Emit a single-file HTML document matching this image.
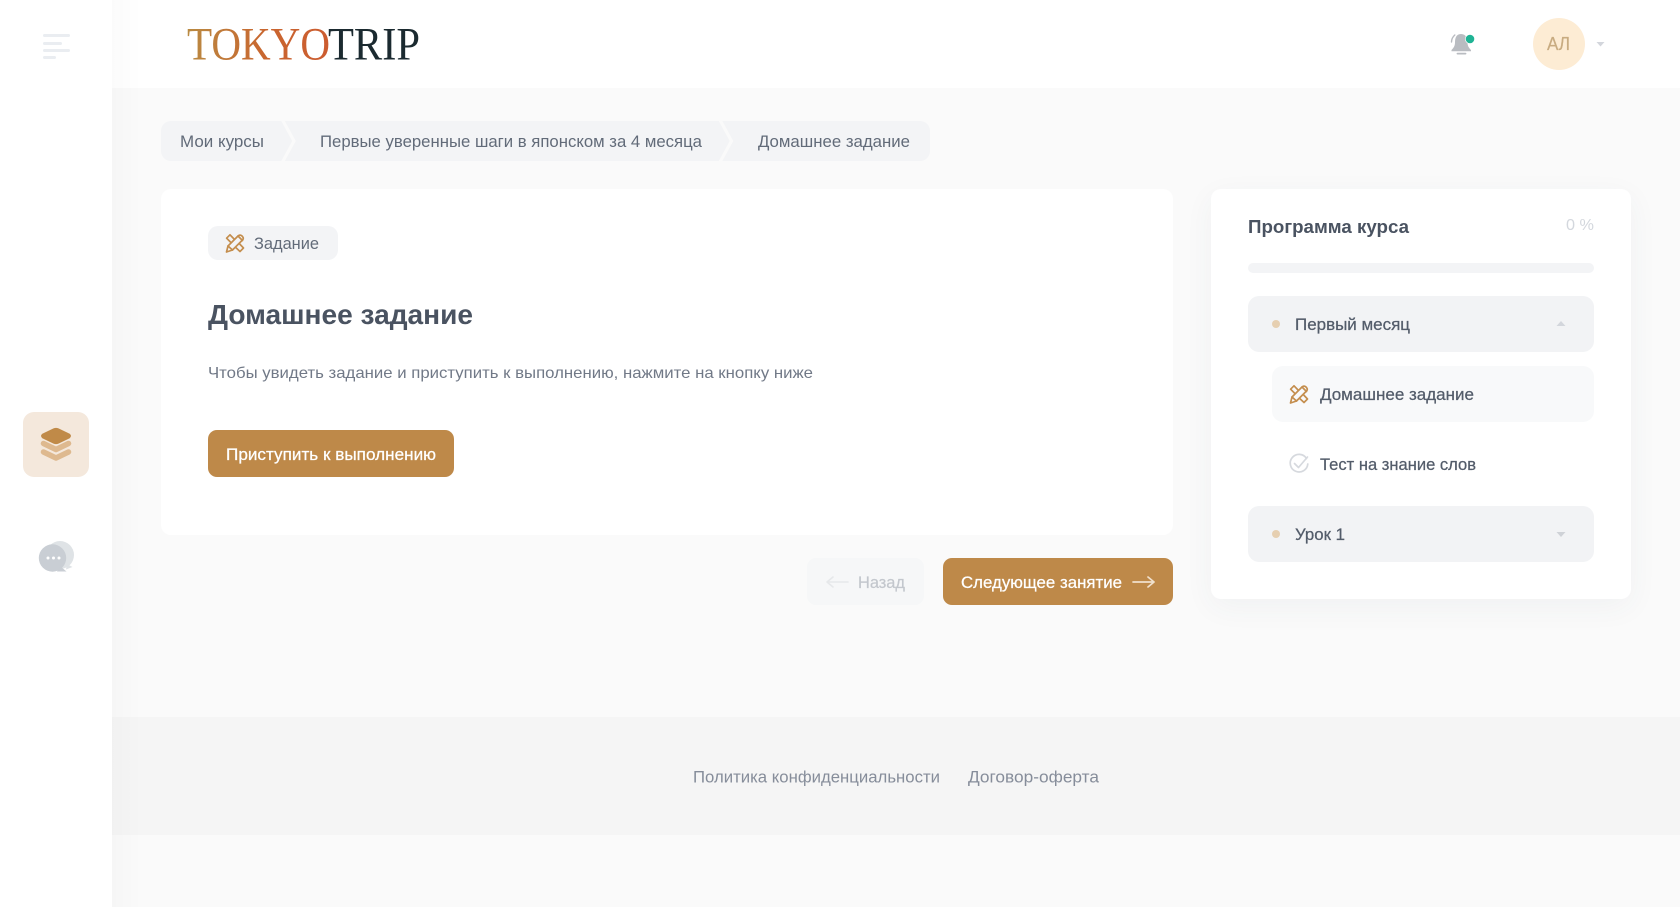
<!DOCTYPE html>
<html lang="ru">
<head>
<meta charset="utf-8">
<title>Домашнее задание</title>
<style>
html,body{margin:0;padding:0;width:1680px;height:907px;overflow:hidden;background:#fafafa;font-family:"Liberation Sans",sans-serif}
body{position:relative}
#p{position:absolute;left:0;top:0;width:1680px;height:907px;filter:blur(.35px)}
.b{position:absolute;box-sizing:border-box}
svg.o{position:absolute;left:0;top:0}
</style>
</head>
<body>
<div id="p">
<div class="b" style="left:112px;top:717px;width:1568px;height:118px;background:#f5f5f5"></div>
<div class="b" style="left:112px;top:0;width:1568px;height:88px;background:#fff"></div>
<div class="b" style="left:112px;top:0;width:30px;height:907px;background:linear-gradient(90deg,rgba(0,0,0,.016),rgba(0,0,0,0))"></div>
<div class="b" style="left:0;top:0;width:112px;height:907px;background:#fff"></div>
<div class="b" style="left:23px;top:412px;width:66px;height:65px;background:#f4e8dc;border-radius:11px"></div>
<div class="b" style="left:161px;top:121px;width:769px;height:40px;background:#f3f4f6;border-radius:10px"></div>
<div class="b" style="left:161px;top:189px;width:1012px;height:346px;background:#fff;border-radius:10px"></div>
<div class="b" style="left:208px;top:226px;width:130px;height:34px;background:#f3f4f6;border-radius:10px"></div>
<div class="b" style="left:208px;top:430px;width:246px;height:47px;background:#be8949;border-radius:9px"></div>
<div class="b" style="left:806.5px;top:558px;width:117px;height:47px;background:#f6f7f8;border-radius:9px"></div>
<div class="b" style="left:943px;top:558px;width:230px;height:47px;background:#be8949;border-radius:9px"></div>
<div class="b" style="left:1211px;top:189px;width:420px;height:410px;background:#fff;border-radius:10px;box-shadow:0 8px 30px rgba(60,70,90,.05)"></div>
<div class="b" style="left:1248px;top:263px;width:346px;height:10px;background:#f3f4f6;border-radius:5px"></div>
<div class="b" style="left:1248px;top:296px;width:346px;height:56px;background:#f2f3f5;border-radius:11px"></div>
<div class="b" style="left:1272px;top:366px;width:322px;height:56px;background:#f8f9fa;border-radius:11px"></div>
<div class="b" style="left:1248px;top:506px;width:346px;height:56px;background:#f2f3f5;border-radius:11px"></div>
<div class="b" style="left:1533px;top:18px;width:52px;height:52px;background:#fdecd4;border-radius:50%"></div>

<svg class="o" width="1680" height="907" viewBox="0 0 1680 907" xmlns="http://www.w3.org/2000/svg" font-family="'Liberation Sans',sans-serif">
<defs>
<linearGradient id="lg" gradientUnits="userSpaceOnUse" x1="187" y1="0" x2="330" y2="0">
<stop offset="0" stop-color="#b98a42"/><stop offset=".55" stop-color="#c9662f"/><stop offset="1" stop-color="#cc5c30"/>
</linearGradient>
<g id="task" fill="none" stroke="#c48e4e" stroke-width="1.7" stroke-linejoin="round" stroke-linecap="round">
<path d="M1.5 19 3 13 13 3Q15 1.2 17 3L17.5 3.5Q19 5.5 17.5 7L7.5 17Z"/>
<path d="M13 3 17.5 7.5M3 13 7.5 17"/>
<path d="M8.7 5.6 5 1.8 1.6 5.2 5.4 9"/>
<path d="M14.7 11 18.5 15 15 18.5 11 14.7"/>
</g>
</defs>

<!-- hamburger -->
<g fill="#eaedf1">
<rect x="43" y="34" width="27" height="3" rx="1.5"/>
<rect x="43" y="42" width="19" height="3" rx="1.5"/>
<rect x="43" y="49" width="27" height="3" rx="1.5"/>
<rect x="43" y="56" width="13" height="3" rx="1.5"/>
</g>

<!-- layers -->
<path d="M53.5 428.4Q56 427.4 58.5 428.4L69.7 433.8Q72.2 436 69.7 438.2L58.5 443.6Q56 444.6 53.5 443.6L42.3 438.2Q39.8 436 42.3 433.8Z" fill="#c08a48"/>
<g fill="none" stroke="#deb98f" stroke-width="5.5" stroke-linecap="round" stroke-linejoin="round">
<path d="M43.5 443.5 56 449.5 68.5 443.5"/>
<path d="M43.5 452 56 458 68.5 452"/>
</g>

<!-- chat -->
<circle cx="60" cy="555" r="14" fill="#dfe3e6"/>
<path d="M67 564 72.5 567 66 569.5Z" fill="#dfe3e6"/>
<circle cx="52.5" cy="558" r="13.7" fill="#c9ced4"/>
<path d="M60 566 66.5 571.5 57 571.5Z" fill="#c9ced4"/>
<g fill="#fff"><circle cx="48" cy="558" r="1.5"/><circle cx="53.5" cy="558" r="1.5"/><circle cx="59" cy="558" r="1.5"/></g>

<!-- logo -->
<text x="187" y="59.5" font-family="'Liberation Serif',serif" font-size="47" fill="url(#lg)" textLength="143" lengthAdjust="spacingAndGlyphs">TOKYO</text>
<text x="328" y="59.5" font-family="'Liberation Serif',serif" font-size="47" fill="#1b2a30" textLength="92" lengthAdjust="spacingAndGlyphs">TRIP</text>

<!-- bell -->
<path d="M1461 34C1466 34 1467.5 38.5 1467.5 42.5 1467.5 46 1469 48 1471 50L1471 51.2H1451.5L1451.5 50C1453.5 48 1455 46 1455 42.5 1455 38.5 1456 34 1461 34Z" fill="#b9bcc1"/>
<path d="M1457.5 53.6H1465.5" stroke="#b9bcc1" stroke-width="1.8" stroke-linecap="round"/>
<path d="M1451.5 42C1451.5 39 1452.8 36.8 1454.8 35" stroke="#b9bcc1" stroke-width="1.4" fill="none" stroke-linecap="round"/>
<circle cx="1470" cy="39" r="5" fill="#fff"/>
<circle cx="1470" cy="39" r="4.3" fill="#1fb394"/>

<!-- avatar -->
<text x="1547" y="50" font-size="18" fill="#c8ab80" stroke="#c8ab80" stroke-width=".2" textLength="23" lengthAdjust="spacingAndGlyphs">АЛ</text>
<path d="M1596.5 42H1604.5L1600.5 46.5Z" fill="#d3d6dc"/>

<!-- breadcrumb -->
<g fill="none" stroke="#fafafa" stroke-width="3.2">
<path d="M282.5 120 294 141 282.5 162"/>
<path d="M720 120 731.5 141 720 162"/>
</g>
<g font-size="16.5" fill="#626b79">
<text x="180" y="147" textLength="84" lengthAdjust="spacingAndGlyphs">Мои курсы</text>
<text x="320" y="147" textLength="382" lengthAdjust="spacingAndGlyphs">Первые уверенные шаги в японском за 4 месяца</text>
<text x="758" y="147" textLength="152" lengthAdjust="spacingAndGlyphs">Домашнее задание</text>
</g>

<!-- tag -->
<use href="#task" x="225" y="233"/>
<text x="254" y="249" font-size="16.5" fill="#626b79" textLength="65" lengthAdjust="spacingAndGlyphs">Задание</text>

<!-- title -->
<text x="208" y="324" font-size="28" font-weight="700" fill="#4a5361" textLength="265" lengthAdjust="spacingAndGlyphs">Домашнее задание</text>
<text x="208" y="378" font-size="16" fill="#717987" textLength="605" lengthAdjust="spacingAndGlyphs">Чтобы увидеть задание и приступить к выполнению, нажмите на кнопку ниже</text>

<!-- buttons -->
<text x="226" y="460" font-size="16.5" fill="#fff" stroke="#fff" stroke-width=".25" textLength="210" lengthAdjust="spacingAndGlyphs">Приступить к выполнению</text>
<g fill="none" stroke="#e6e8ea" stroke-width="1.6" stroke-linecap="round" stroke-linejoin="round">
<path d="M848 582H827M833 577 827 582 833 587"/>
</g>
<text x="858" y="588" font-size="16.5" fill="#c3c7cd" stroke="#c3c7cd" stroke-width=".2" textLength="47" lengthAdjust="spacingAndGlyphs">Назад</text>
<text x="961" y="588" font-size="16.5" fill="#fff" stroke="#fff" stroke-width=".25" textLength="161" lengthAdjust="spacingAndGlyphs">Следующее занятие</text>
<g fill="none" stroke="#f0e0cc" stroke-width="1.7" stroke-linecap="round" stroke-linejoin="round">
<path d="M1133 582H1154M1148 577 1154 582 1148 587"/>
</g>

<!-- program -->
<text x="1248" y="233" font-size="18.5" font-weight="700" fill="#4a5361" textLength="161" lengthAdjust="spacingAndGlyphs">Программа курса</text>
<text x="1566" y="230" font-size="16" fill="#d3d7dd" textLength="28" lengthAdjust="spacingAndGlyphs">0 %</text>

<circle cx="1276" cy="324" r="4" fill="#e6cfb1"/>
<text x="1295" y="330" font-size="16.5" fill="#535c6a" stroke="#535c6a" stroke-width=".25" textLength="115" lengthAdjust="spacingAndGlyphs">Первый месяц</text>
<path d="M1556.5 326H1565.5L1561 321Z" fill="#d3d6dc"/>

<use href="#task" x="1289" y="384"/>
<text x="1320" y="400" font-size="16.5" fill="#535c6a" stroke="#535c6a" stroke-width=".25" textLength="154" lengthAdjust="spacingAndGlyphs">Домашнее задание</text>

<path d="M1306.5 458.5A8.8 8.8 0 1 0 1307.8 464" fill="none" stroke="#d6d9de" stroke-width="1.7" stroke-linecap="round"/>
<path d="M1294.5 463.5 1298.5 467.5 1307.5 457" fill="none" stroke="#d6d9de" stroke-width="1.7" stroke-linecap="round" stroke-linejoin="round"/>
<text x="1320" y="470" font-size="16.5" fill="#535c6a" stroke="#535c6a" stroke-width=".25" textLength="156" lengthAdjust="spacingAndGlyphs">Тест на знание слов</text>

<circle cx="1276" cy="534" r="4" fill="#e6cfb1"/>
<text x="1295" y="540" font-size="16.5" fill="#535c6a" stroke="#535c6a" stroke-width=".25" textLength="50" lengthAdjust="spacingAndGlyphs">Урок 1</text>
<path d="M1556.5 532H1565.5L1561 537Z" fill="#cfd2d7"/>

<!-- footer -->
<text x="693" y="782.5" font-size="16.5" fill="#868d9a" textLength="247" lengthAdjust="spacingAndGlyphs">Политика конфиденциальности</text>
<text x="968" y="782.5" font-size="16.5" fill="#868d9a" textLength="131" lengthAdjust="spacingAndGlyphs">Договор-оферта</text>
</svg>
</div>
</body>
</html>
